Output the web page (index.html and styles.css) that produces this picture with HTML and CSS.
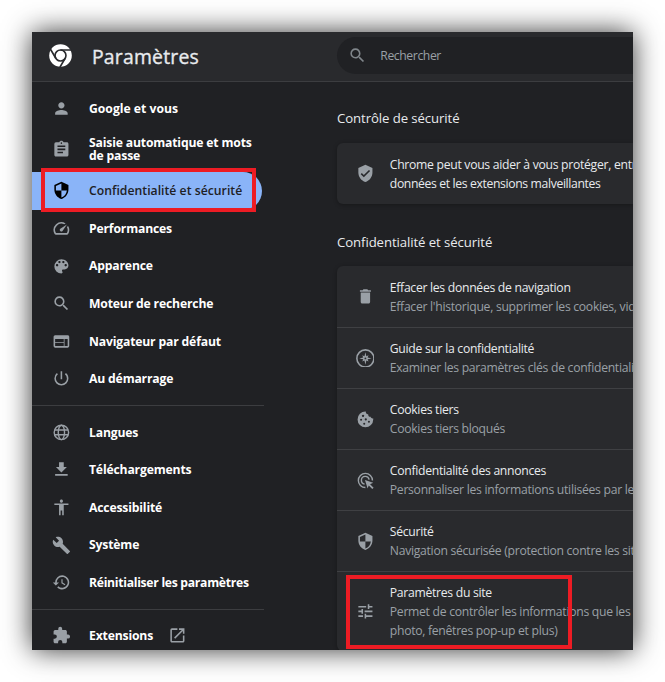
FILE: index.html
```
<!DOCTYPE html>
<html lang="fr">
<head>
<meta charset="utf-8">
<title>Paramètres</title>
<link rel="stylesheet" href="styles.css">
</head>
<body>
<div class="window">
  <header class="topbar">
    <svg class="logo" viewBox="0 0 24 24"><circle cx="12" cy="12" r="11.8" fill="#fff"/><g fill="none" stroke="#292a2d" stroke-width="1.7"><circle cx="12" cy="12" r="5.7"/><path d="M12 6.3h11M7.1 14.9L1.4 5.2M16.9 14.9l-5.5 9.3"/></g></svg>
    <h1>Paramètres</h1>
    <div class="search">
      <svg class="icon" viewBox="0 0 24 24"><path d="M15.5 14h-.79l-.28-.27A6.47 6.47 0 0 0 16 9.5 6.5 6.5 0 1 0 9.5 16c1.61 0 3.09-.59 4.23-1.57l.27.28v.79l5 4.99L20.49 19l-4.99-5zm-6 0C7.01 14 5 11.99 5 9.5S7.01 5 9.5 5 14 7.01 14 9.5 11.99 14 9.5 14z"/></svg>
      <span>Rechercher</span>
    </div>
  </header>
  <div class="body">
    <nav class="nav">
      <a class="item loose"><svg class="icon" viewBox="0 0 24 24"><path d="M12 12c2.21 0 4-1.79 4-4s-1.79-4-4-4-4 1.79-4 4 1.79 4 4 4zm0 2c-2.67 0-8 1.34-8 4v2h16v-2c0-2.66-5.33-4-8-4z"/></svg><span>Google et vous</span></a>
      <a class="item tall"><svg class="icon" viewBox="0 0 24 24"><path d="M19 3h-4.18C14.4 1.84 13.3 1 12 1s-2.4.84-2.82 2H5a2 2 0 0 0-2 2v14c0 1.1.9 2 2 2h14c1.1 0 2-.9 2-2V5c0-1.1-.9-2-2-2zm-7 0c.55 0 1 .45 1 1s-.45 1-1 1-1-.45-1-1 .45-1 1-1zm2 14H7v-2h7v2zm3-4H7v-2h10v2zm0-4H7V7h10v2z"/></svg><span>Saisie automatique et mots<br>de passe</span></a>
      <a class="item selected"><svg class="icon" viewBox="0 0 24 24"><path d="M12 1L3 5v6c0 5.55 3.84 10.74 9 12 5.16-1.26 9-6.45 9-12V5l-9-4zm0 10.99h7c-.53 4.12-3.28 7.79-7 8.94V12H5V6.3l7-3.11v8.8z"/></svg><span>Confidentialité et sécurité</span></a>
      <a class="item"><svg class="icon" viewBox="0 0 24 24"><path d="M20.38 8.57l-1.23 1.85a8 8 0 0 1-.22 7.58H5.07A8 8 0 0 1 15.58 6.85l1.85-1.23A10 10 0 0 0 3.35 19a2 2 0 0 0 1.72 1h13.85a2 2 0 0 0 1.74-1 10 10 0 0 0-.27-10.44zm-9.79 6.84a2 2 0 0 0 2.83 0l5.66-8.49-8.49 5.66a2 2 0 0 0 0 2.83z"/></svg><span>Performances</span></a>
      <a class="item"><svg class="icon" viewBox="0 0 24 24"><path d="M12 3a9 9 0 0 0 0 18c.83 0 1.5-.67 1.5-1.5 0-.39-.15-.74-.39-1.01-.23-.26-.38-.61-.38-.99 0-.83.67-1.5 1.5-1.5H16c2.76 0 5-2.24 5-5 0-4.42-4.03-8-9-8zm-5.5 9C5.67 12 5 11.33 5 10.5S5.67 9 6.5 9 8 9.67 8 10.5 7.33 12 6.5 12zm3-4C8.67 8 8 7.33 8 6.5S8.67 5 9.5 5s1.5.67 1.5 1.5S10.33 8 9.5 8zm5 0c-.83 0-1.5-.67-1.5-1.5S13.67 5 14.5 5s1.5.67 1.5 1.5S15.33 8 14.5 8zm3 4c-.83 0-1.5-.67-1.5-1.5S16.67 9 17.5 9s1.5.67 1.5 1.5-.67 1.5-1.5 1.5z"/></svg><span>Apparence</span></a>
      <a class="item"><svg class="icon" viewBox="0 0 24 24"><path d="M15.5 14h-.79l-.28-.27A6.47 6.47 0 0 0 16 9.5 6.5 6.5 0 1 0 9.5 16c1.61 0 3.09-.59 4.23-1.57l.27.28v.79l5 4.99L20.49 19l-4.99-5zm-6 0C7.01 14 5 11.99 5 9.5S7.01 5 9.5 5 14 7.01 14 9.5 11.99 14 9.5 14z"/></svg><span>Moteur de recherche</span></a>
      <a class="item"><svg class="icon" viewBox="0 0 24 24"><path d="M20 4H4a2 2 0 0 0-1.99 2L2 18c0 1.1.9 2 2 2h16c1.1 0 2-.9 2-2V6c0-1.1-.9-2-2-2zm-5 14H4v-4h11v4zm0-5H4V9h11v4zm5 5h-4V9h4v9z"/></svg><span>Navigateur par défaut</span></a>
      <a class="item"><svg class="icon" viewBox="0 0 24 24"><path d="M13 3h-2v10h2V3zm4.83 2.17l-1.42 1.42A6.92 6.92 0 0 1 19 12a7 7 0 1 1-11.42-5.42L6.17 5.17A8.93 8.93 0 0 0 3 12a9 9 0 0 0 18 0c0-2.74-1.23-5.18-3.17-6.83z"/></svg><span>Au démarrage</span></a>
      <hr>
      <a class="item"><svg class="icon line" viewBox="0 0 24 24"><circle cx="12" cy="12" r="9.2"/><ellipse cx="12" cy="12" rx="4" ry="9.2"/><path d="M3.5 9h17M3.5 15h17"/></svg><span>Langues</span></a>
      <a class="item"><svg class="icon" viewBox="0 0 24 24"><path d="M19 9h-4V3H9v6H5l7 7 7-7zM4 18v2h16v-2H4z"/></svg><span>Téléchargements</span></a>
      <a class="item"><svg class="icon" viewBox="0 0 24 24"><path d="M12 2c1.1 0 2 .9 2 2s-.9 2-2 2-2-.9-2-2 .9-2 2-2zm9 7h-6v13h-2v-6h-2v6H9V9H3V7h18v2z"/></svg><span>Accessibilité</span></a>
      <a class="item"><svg class="icon" viewBox="0 0 24 24"><path d="M22.7 19l-9.1-9.1c.9-2.3.4-5-1.5-6.900-2-2-5-2.400-7.400-1.300L9 6 6 9 1.600 4.700C.4 7.100.9 10.100 2.900 12.100c1.900 1.900 4.600 2.400 6.900 1.500l9.100 9.100c.4.4 1 .4 1.400 0l2.300-2.300c.5-.4.5-1.100.1-1.400z"/></svg><span>Système</span></a>
      <a class="item tight"><svg class="icon" viewBox="0 0 24 24"><path d="M13 3a9 9 0 0 0-9 9H1l3.890 3.890.07.14L9 12H6a7 7 0 1 1 2.060 4.940l-1.420 1.420A9 9 0 1 0 13 3zm-1 5v5l4.280 2.540.72-1.210-3.500-2.080V8H12z"/></svg><span>Réinitialiser les paramètres</span></a>
      <hr>
      <a class="item"><svg class="icon" viewBox="0 0 24 24"><path d="M20.500 11H19V7c0-1.100-.9-2-2-2h-4V3.500a2.500 2.500 0 0 0-5 0V5H4a2 2 0 0 0-1.990 2v3.800H3.500a2.700 2.700 0 0 1 0 5.400H2V20c0 1.100.9 2 2 2h3.800v-1.500a2.700 2.700 0 0 1 5.400 0V22H17c1.100 0 2-.9 2-2v-4h1.500a2.500 2.500 0 0 0 0-5z"/></svg><span>Extensions</span><svg class="icon external" viewBox="0 0 24 24"><path d="M19 19H5V5h7V3H5a2 2 0 0 0-2 2v14c0 1.100.89 2 2 2h14c1.100 0 2-.9 2-2v-7h-2v7zM14 3v2h3.590l-9.830 9.830 1.410 1.410L19 6.410V10h2V3h-7z"/></svg></a>
      <div class="highlight highlight-nav"></div>
    </nav>
    <main class="main">
      <h2>Contrôle de sécurité</h2>
      <section class="card check">
        <div class="row"><svg class="icon" viewBox="0 0 24 24"><path d="M12 1L3 5v6c0 5.550 3.840 10.740 9 12 5.160-1.260 9-6.450 9-12V5l-9-4zm-2 16l-4-4 1.410-1.410L10 14.170l6.590-6.590L18 9l-8 8z"/></svg><div><p>Chrome peut vous aider à vous protéger, entre</p><p class="condensed">données et les extensions malveillantes</p></div></div>
      </section>
      <h2 class="second">Confidentialité et sécurité</h2>
      <section class="card">
        <div class="row"><svg class="icon" viewBox="0 0 24 24"><path d="M6 19c0 1.100.9 2 2 2h8c1.100 0 2-.9 2-2V7H6v12zM19 4h-3.500l-1-1h-5l-1 1H5v2h14V4z"/></svg><div><p>Effacer les données de navigation</p><p class="sub">Effacer l'historique, supprimer les cookies, vider</p></div></div>
        <div class="row"><svg class="icon" viewBox="0 0 24 24"><circle cx="12" cy="12" r="10.900" fill="none" stroke="#9aa0a6" stroke-width="2"/><path d="M12 4l1.200 5.200 2.800-1.200-1.200 2.800L20 12l-5.200 1.200L16 16l-2.800-1.200L12 20l-1.200-5.200L8 16l1.200-2.800L4 12l5.200-1.200L8 8l2.800 1.200z"/><circle cx="12" cy="12" r="1.200" fill="#292a2d"/></svg><div><p>Guide sur la confidentialité</p><p class="sub">Examiner les paramètres clés de confidentialité</p></div></div>
        <div class="row"><svg class="icon" viewBox="0 0 24 24"><path d="M12 2a10 10 0 1 0 10 10c0-.6 0-1-.1-1.500-1 .5-2.300.2-2.900-.8-.2-.4-.3-.8-.3-1.200-1.900.4-3.300-1.100-3-2.900-2.100.1-3.500-1.500-3.200-3.600z"/><g fill="#292a2d"><circle cx="9" cy="7.500" r="1.500"/><circle cx="6.500" cy="12.500" r="1.300"/><circle cx="12.500" cy="12" r="1.400"/><circle cx="10.500" cy="17.500" r="1.300"/><circle cx="16.500" cy="15" r="1.300"/></g></svg><div><p>Cookies tiers</p><p class="sub">Cookies tiers bloqués</p></div></div>
        <div class="row"><svg class="icon line ads" viewBox="0 0 24 24"><path d="M12 21A9 9 0 1 1 21 12M11 16.800A5 5 0 1 1 16.800 11"/><path d="M11.500 11.500l10.500 3.600-4 1.700 4.500 4.500-1.700 1.700-4.500-4.500-1.500 4z" fill="#9aa0a6" stroke="none"/></svg><div><p>Confidentialité des annonces</p><p class="sub">Personnaliser les informations utilisées par les</p></div></div>
        <div class="row"><svg class="icon" viewBox="0 0 24 24"><path d="M12 1L3 5v6c0 5.550 3.840 10.740 9 12 5.160-1.260 9-6.450 9-12V5l-9-4zm0 10.990h7c-.53 4.120-3.280 7.790-7 8.940V12H5V6.300l7-3.110v8.800z"/></svg><div><p>Sécurité</p><p class="sub">Navigation sécurisée (protection contre les sites</p></div></div>
        <div class="row"><svg class="icon" viewBox="0 0 24 24"><path d="M3 17v2h6v-2H3zM3 5v2h10V5H3zm10 16v-2h8v-2h-8v-2h-2v6h2zM7 9v2H3v2h4v2h2V9H7zm14 4v-2H11v2h10zm-6-4h2V7h4V5h-4V3h-2v6z"/></svg><div><p>Paramètres du site</p><p class="sub">Permet de contrôler les informations que les sites</p><p class="sub">photo, fenêtres pop-up et plus)</p></div></div>
      </section>
      <div class="highlight highlight-site"></div>
    </main>
  </div>
</div>
</body>
</html>
```
FILE: styles.css
```
* { box-sizing: border-box; }
body {
  margin: 0;
  padding: 32px;
  height: 682px;
  overflow: hidden;
  background: #fff;
  color: #e8eaed;
  font: 12.2px/19px "Open Sans", "Noto Sans", sans-serif;
}
h1, h2, p { margin: 0; }
.window {
  width: 601px;
  height: 618px;
  overflow: hidden;
  background: #202124;
  box-shadow: 0 0 26px rgba(0, 0, 0, .8);
}
.topbar {
  display: flex;
  align-items: center;
  height: 50px;
  padding-left: 17px;
  background: #292a2d;
  border-bottom: 1px solid #3c3d40;
}
.logo { width: 23px; height: 23px; margin-top: -2px; }
h1 {
  width: 244px;
  margin-left: 20px;
  font-size: 19.4px;
  line-height: 26px;
  font-weight: 500;
  letter-spacing: .2px;
  -webkit-text-stroke: .35px #e8eaed;
}
.search {
  display: flex;
  align-items: center;
  flex: 1;
  gap: 13.5px;
  height: 37px;
  margin-top: -2px;
  padding: 0 0 0 11px;
  margin-left: 1px;
  border-radius: 19px 0 0 19px;
  background: #202124;
  color: #9aa0a6;
  letter-spacing: -.5px;
  font-size: 12.2px;
  letter-spacing: -.4px;
}
.search .icon { fill: #80868b; }
.icon { flex: none; width: 18.8px; height: 18.8px; fill: #9aa0a6; }
.line { fill: none; stroke: #9aa0a6; stroke-width: 1.8; }
.body { display: flex; }
.nav {
  position: relative;
  flex: none;
  width: 232px;
  height: 568px;
  padding-top: 7.4px;
  color: #fff;
  font-weight: 700;
  letter-spacing: -.17px;
  line-height: 13px;
}
.item {
  display: flex;
  align-items: center;
  gap: 18.6px;
  height: 37.6px;
  width: 230px;
  padding-left: 19.6px;
  white-space: nowrap;
}
.tall { height: 45px; }
.loose { letter-spacing: 0; }
.tight { letter-spacing: -.29px; }
.selected {
  border-radius: 0 19px 19px 0;
  background: #8ab4f8;
  color: #202124;
  font-weight: 600;
  letter-spacing: .03px;
}
.selected .icon { fill: #000; }
.external { margin-left: -4px; }
hr { height: 1px; margin: 7.4px 0; border: 0; background: #3c3d40; }
.main { position: relative; flex: 1; min-width: 0; margin-left: 73px; padding-top: 26px; }
h2 { font-size: 13.2px; line-height: 20px; font-weight: 500; letter-spacing: -.09px; }
.second { margin-top: 28px; }
.card {
  margin-top: 14px;
  border-radius: 6px 0 0 6px;
  background: #292a2d;
  box-shadow: 0 1px 4px rgba(0, 0, 0, .3);
  overflow: hidden;
}
.check { margin-top: 15px; }
.row {
  display: flex;
  align-items: center;
  gap: 15.4px;
  height: 61px;
  padding-left: 18.6px;
  white-space: nowrap;
  letter-spacing: -.29px;
}
.row + .row { border-top: 1px solid #3f4043; }
.row:nth-child(6) { height: 80px; }
.sub { color: #9aa0a6; }
.condensed { letter-spacing: -.36px; }
.highlight { position: absolute; border: 4.5px solid #ed1c24; }
.highlight-nav { left: 9px; top: 86px; width: 215px; height: 44px; }
.highlight-site { left: 9px; top: 493px; width: 226px; height: 74px; }
```
